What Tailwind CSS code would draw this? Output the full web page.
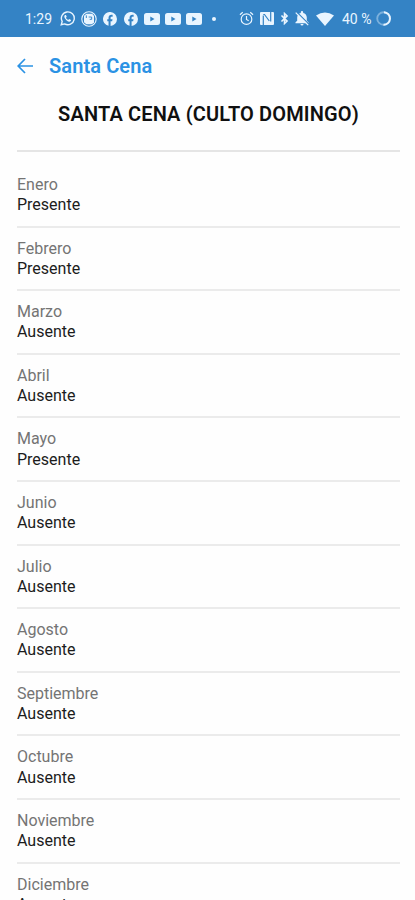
<!DOCTYPE html>
<html lang="es">
<head>
<meta charset="utf-8">
<title>Santa Cena</title>
<script src="https://cdn.jsdelivr.net/npm/@tailwindcss/browser@4"></script>
</head>
<body class="h-[900px] overflow-hidden bg-[#fefefe] font-[Roboto,sans-serif]">
<svg class="hidden">
  <symbol id="fb" viewBox="0 0 24 24"><path fill="currentColor" d="M24 12a12 12 0 1 0-14.500 11.700V16H7.300v-3.500h2.200V10c0-3.500 2-5.200 5-5.200h2v3.400h-1.500c-1.500 0-2 .8-2 1.900v2.400h3.300l-.6 3.500H13v7.900A12 12 0 0 0 24 12z"/></symbol>
  <symbol id="yt" viewBox="0 0 16 12"><path fill="currentColor" fill-rule="evenodd" d="M2.500 0h11Q16 0 16 2.500v7Q16 12 13.500 12h-11Q0 12 0 9.500v-7Q0 0 2.500 0zM6.300 3.600v4.800L10.500 6z"/></symbol>
</svg>
<header class="flex h-[37px] items-center bg-[#3483c5] text-[#e9f5ff]">
  <span class="ml-[25px] w-[35px] text-[14px] leading-none">1:29</span>
  <svg class="h-[15px] w-[15px]" viewBox="0 0 24 24" fill="none" stroke="currentColor" stroke-width="2.200"><path d="M2 22l1.500-5.300A10.300 10.300 0 1 1 7.300 20.600z"/><path fill="currentColor" stroke="none" d="M8.200 6.500c-3.200 2-.2 6.300 2.500 8.600 3.500 2.800 6.500 2.500 7-.8l-3-1.600-1.600 1.500c-1.500-.6-3-2.100-3.600-3.600L10.800 9 9.500 6.300z"/></svg>
  <svg class="ml-[6px] h-4 w-4" viewBox="0 0 24 24" fill="none" stroke="currentColor"><circle cx="12" cy="12" r="10.800" stroke-width="1.700"/><path fill="currentColor" stroke="none" d="M4.500 17V7L8 4h9l2.500 3.500v10L16 20H8z"/><path class="stroke-[#3483c5]" stroke-width="1.400" d="M8 6.500v4m3.500-1.500h4.500v3.500h-3"/></svg>
  <svg class="ml-[6px] h-[14px] w-[14px]"><use href="#fb"/></svg>
  <svg class="ml-[7px] h-[14px] w-[14px]"><use href="#fb"/></svg>
  <svg class="ml-[6px] h-3 w-4"><use href="#yt"/></svg>
  <svg class="ml-[5px] h-3 w-4"><use href="#yt"/></svg>
  <svg class="ml-[5px] h-3 w-4"><use href="#yt"/></svg>
  <span class="ml-[10px] h-1 w-1 rounded-full bg-current"></span>
  <svg class="ml-[23px] h-[15px] w-[15px]" viewBox="0 0 24 24" fill="none" stroke="currentColor" stroke-width="1.900"><circle cx="12" cy="13" r="8.500"/><path d="M12 8v5.500l3.500 2M1.500 6L6 2m16.500 4L18 2"/></svg>
  <svg class="ml-[6px] h-[13px] w-[14px]" viewBox="0 0 14 13"><rect width="14" height="13" rx="1" fill="currentColor"/><path fill="none" class="stroke-[#3483c5]" stroke-width="1.200" d="M3.300 13V3.500M3.300 2.500H4.500L9.300 9M10.700 0v9.500"/></svg>
  <svg class="ml-[6px] h-[13px] w-[9px]" viewBox="0 0 10 15" fill="none" stroke="currentColor" stroke-width="1.800"><path d="M1.500 4l6.500 6.500L5 13.300V1.700L8 4.500 1.500 11"/></svg>
  <svg class="ml-[5px] h-[15px] w-[16px]" viewBox="0 0 15 15"><path fill="currentColor" d="M1 12.300v-1l1.700-1.600V6.500C2.700 4 4.200 2.300 6.300 1.900V1.300a1.200 1.200 0 0 1 2.400 0v.6c2.100.4 3.600 2.100 3.600 4.600v3.200L14 11.300v1zM6 13h3a1.500 1.500 0 0 1-3 0z"/><path class="stroke-[#3483c5]" stroke-width="1.100" d="M2.200 1l12 12"/><path stroke="currentColor" stroke-width="1.300" d="M1.200 1.600l12.500 12.500"/></svg>
  <svg class="ml-[6px] h-[14px] w-[18px]" viewBox="0 0 18 14"><path fill="currentColor" d="M0 3.500Q9-2.500 18 3.500L9 14z"/></svg>
  <span class="ml-[8px] w-[34px] whitespace-nowrap text-[14px] leading-none">40 %</span>
  <svg class="h-[15px] w-[15px]" viewBox="0 0 16 16" fill="none" stroke="currentColor" stroke-width="2"><circle cx="8" cy="8" r="6.700" opacity=".4"/><path d="M8.500 1.300A6.700 6.700 0 0 1 8 14.700"/></svg>
</header>
<nav class="flex h-[57px] items-center pl-[17px] text-[#2b92e4]">
  <svg class="h-4 w-4" viewBox="0 0 16 16" fill="none" stroke="currentColor" stroke-width="1.700"><path d="M16 8H1.500M8 1L1.200 8 8 15"/></svg>
  <span class="ml-4 text-[20px] font-semibold tracking-[0.1px]">Santa Cena</span>
</nav>
<main class="pr-[15px] pl-[17px]">
  <h1 class="h-[58px] border-b-2 border-[#e5e5e5] pt-[6px] text-center text-[20px] leading-[28px] font-semibold tracking-[0.14px] whitespace-nowrap text-[#101010]">SANTA CENA (CULTO DOMINGO)</h1>
  <dl id="months" class="pt-[12px]"></dl>
</main>
<script>
  const months = [['Enero','Presente'],['Febrero','Presente'],['Marzo','Ausente'],['Abril','Ausente'],['Mayo','Presente'],['Junio','Ausente'],['Julio','Ausente'],['Agosto','Ausente'],['Septiembre','Ausente'],['Octubre','Ausente'],['Noviembre','Ausente'],['Diciembre','Ausente']];
  document.getElementById('months').innerHTML = months.map(([m, s]) =>
    `<div class="h-[63.6px] border-b-2 border-[#ebebeb] pt-[11px] text-[16px] leading-[20.2px]"><dt class="text-[#747474]">${m}</dt><dd class="text-[#1c1c1c]">${s}</dd></div>`).join('');
</script>
</body>
</html>
